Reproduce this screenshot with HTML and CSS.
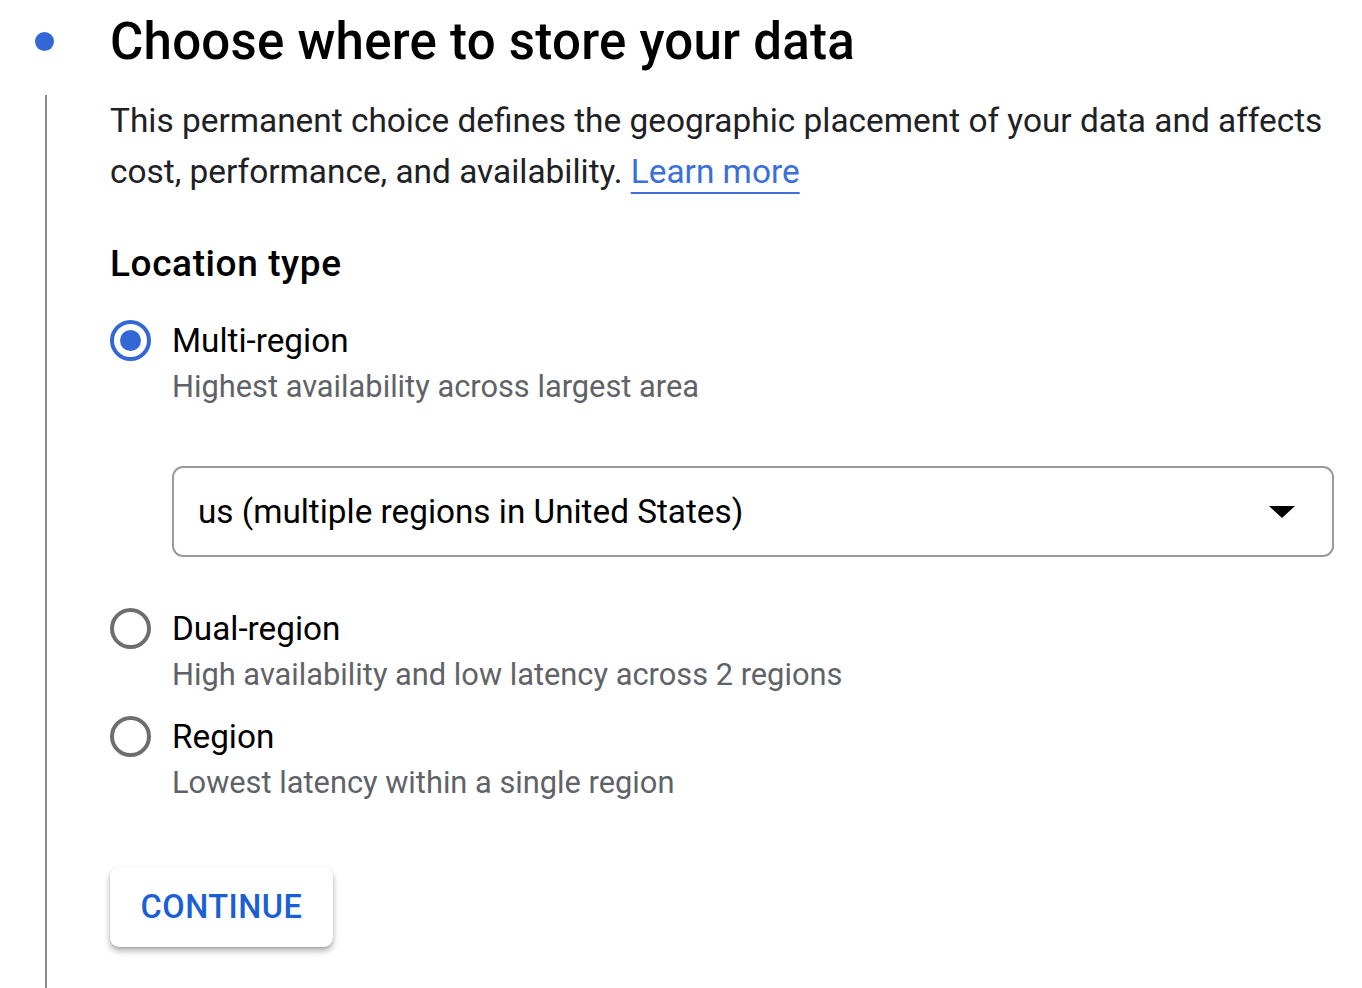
FILE: index.html
```html
<!DOCTYPE html>
<html lang="en">
<head>
<meta charset="utf-8">
<title>Choose where to store your data</title>
<link rel="stylesheet" href="styles.css">
</head>
<body>
<div class="step">
  <div class="rail">
    <span class="dot"></span>
    <span class="line"></span>
  </div>
  <div class="content">
    <h1 class="title">Choose where to store your data</h1>
    <p class="desc">This permanent choice defines the geographic placement of your data and affects cost, performance, and availability. <a class="link" href="#">Learn more</a></p>
    <h2 class="section">Location type</h2>
    <div class="options">
      <div class="option">
        <span class="radio checked"></span>
        <div class="opt-text">
          <div class="opt-title">Multi-region</div>
          <div class="opt-sub">Highest availability across largest area</div>
        </div>
      </div>
      <div class="select">
        <span class="select-text">us (multiple regions in United States)</span>
        <svg class="caret" width="28" height="14" viewBox="0 0 28 14"><path d="M1 1h26L14 13z" fill="#000"/></svg>
      </div>
      <div class="option opt-dual">
        <span class="radio"></span>
        <div class="opt-text">
          <div class="opt-title">Dual-region</div>
          <div class="opt-sub">High availability and low latency across 2 regions</div>
        </div>
      </div>
      <div class="option opt-region">
        <span class="radio"></span>
        <div class="opt-text">
          <div class="opt-title">Region</div>
          <div class="opt-sub">Lowest latency within a single region</div>
        </div>
      </div>
    </div>
    <button class="btn">CONTINUE</button>
  </div>
</div>
</body>
</html>
```
FILE: styles.css
```css
* { box-sizing: border-box; }
html, body { margin: 0; padding: 0; background: #fff; }
body {
  font-family: Roboto, "Liberation Sans", Arial, sans-serif;
  color: #202124;
  width: 1362px;
  height: 988px;
  overflow: hidden;
}
.step {
  display: flex;
  height: 988px;
}
.rail {
  width: 110px;
  flex: none;
  display: flex;
  flex-direction: column;
  align-items: flex-start;
  padding-left: 35px;
  padding-top: 32px;
}
.dot {
  width: 19px;
  height: 19px;
  border-radius: 50%;
  background: #3367d6;
  display: block;
}
.line {
  display: block;
  width: 2px;
  flex: 1;
  background: #8a8a8a;
  margin-top: 44px;
  margin-left: 10px;
}
.content {
  flex: 1;
  padding-right: 20px;
}
.title {
  margin: 12px 0 0;
  font-size: 51px;
  font-weight: 500;
  line-height: 60px;
  color: #000;
  letter-spacing: 0.25px;
}
.desc {
  margin: 23px 0 0;
  font-size: 33.4px;
  line-height: 51px;
  color: #202124;
}
.link {
  color: #3b6fd9;
  text-decoration: underline;
  text-decoration-thickness: 2px;
  text-underline-offset: 9px;
}
.section {
  margin: 45px 0 0;
  font-size: 37px;
  font-weight: 500;
  line-height: 44px;
  color: #000;
  letter-spacing: 0.6px;
}
.options {
  margin-top: 34px;
}
.option {
  display: flex;
  align-items: flex-start;
}
.radio {
  width: 41px;
  height: 41px;
  border-radius: 50%;
  border: 4px solid #6e6e6e;
  flex: none;
  margin-top: 0;
  margin-right: 21px;
  display: block;
  position: relative;
}
.radio.checked {
  border-color: #3367d6;
}
.radio.checked::after {
  content: "";
  position: absolute;
  left: 6px;
  top: 6px;
  width: 21px;
  height: 21px;
  border-radius: 50%;
  background: #3367d6;
}
.opt-title {
  font-size: 33.3px;
  line-height: 42px;
  color: #000;
}
.opt-sub {
  font-size: 30.8px;
  line-height: 49px;
  color: #5f6368;
}
.select {
  margin: 55px 0 0 62px;
  width: 1162px;
  height: 91px;
  border: 2px solid #9a9a9a;
  border-radius: 11px;
  display: flex;
  align-items: center;
  justify-content: space-between;
  padding: 0 36px 0 24px;
}
.select-text {
  font-size: 33.3px;
  color: #000;
}
.caret { display: block; }
.opt-dual { margin-top: 51px; }
.opt-region { margin-top: 17px; }
.btn {
  margin-top: 60px;
  width: 223px;
  height: 80px;
  border: none;
  border-radius: 9px;
  background: #fff;
  box-shadow: 0 4px 6px rgba(0,0,0,0.3), 0 1px 2px rgba(0,0,0,0.12);
  font-family: Roboto, "Liberation Sans", Arial, sans-serif;
  font-size: 32.5px;
  font-weight: 500;
  color: #1a5fd6;
  letter-spacing: 0.5px;
  padding: 0;
}
```
